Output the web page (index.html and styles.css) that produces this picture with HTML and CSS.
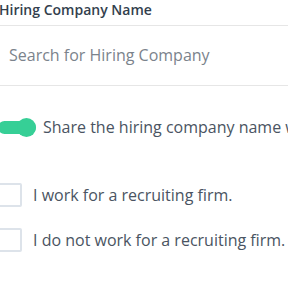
FILE: index.html
```html
<!DOCTYPE html>
<html>
<head>
<meta charset="utf-8">
<link rel="stylesheet" href="styles.css">
</head>
<body>
<div class="form">
  <div class="label">Hiring Company Name</div>
  <div class="input">Search for Hiring Company</div>
  <div class="toggle-row">
    <span class="toggle"><span class="knob"></span></span>
    <span class="toggle-text">Share the hiring company name with candidates</span>
  </div>
  <div class="checks">
    <label class="check"><span class="box"></span><span>I work for a recruiting firm.</span></label>
    <label class="check"><span class="box"></span><span>I do not work for a recruiting firm.</span></label>
  </div>
</div>
</body>
</html>
```
FILE: styles.css
```css
html, body {
  margin: 0;
  padding: 0;
  background: #fff;
  overflow: hidden;
}
body {
  font-family: "Open Sans", "Liberation Sans", sans-serif;
  width: 288px;
  height: 288px;
}
.form {
  margin-left: -2px;
  width: 400px;
}
.label {
  font-size: 14px;
  font-weight: 600;
  color: #333f4d;
  height: 25px;
  line-height: 20px;
  padding-left: 1px;
  white-space: nowrap;
}
.input {
  height: 59px;
  border-top: 1px solid #e6e6e6;
  border-bottom: 1px solid #e6e6e6;
  font-size: 16px;
  color: #7b838c;
  line-height: 59px;
  padding-left: 11px;
  white-space: nowrap;
}
.toggle-row {
  display: flex;
  align-items: center;
  gap: 7px;
  margin-top: 31px;
  height: 20px;
  white-space: nowrap;
}
.toggle {
  position: relative;
  width: 38px;
  height: 13px;
  border-radius: 7px;
  background: #36cf96;
  flex: none;
}
.knob {
  position: absolute;
  right: 0;
  top: -3px;
  width: 19px;
  height: 19px;
  border-radius: 50%;
  background: #36cf96;
}
.toggle-text {
  font-size: 16px;
  color: #4a5462;
}
.checks {
  display: flex;
  flex-direction: column;
  gap: 21px;
  margin-top: 46px;
}
.check {
  display: flex;
  align-items: center;
  gap: 11px;
  font-size: 16px;
  color: #4a5462;
  white-space: nowrap;
}
.box {
  width: 20px;
  height: 20px;
  border: 2px solid #dde3ea;
  border-radius: 2px;
  flex: none;
}
```
